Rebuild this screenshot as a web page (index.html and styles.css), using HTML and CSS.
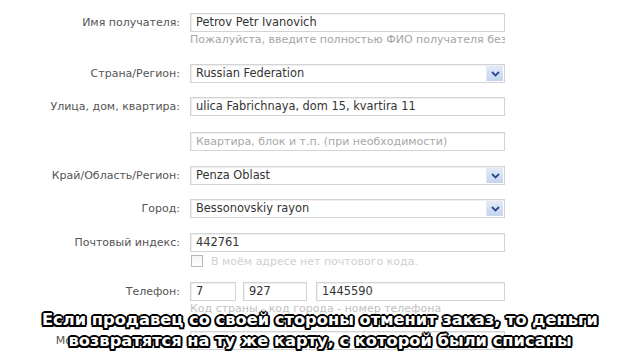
FILE: index.html
```html
<!DOCTYPE html>
<html lang="ru">
<head>
<meta charset="utf-8">
<link rel="stylesheet" href="styles.css">
</head>
<body>
<div class="page">
  <form class="form">
    <div class="row r-name">
      <div class="label">Имя получателя:</div>
      <div class="field">
        <div class="input"><span class="val">Petrov Petr Ivanovich</span></div>
        <div class="hint">Пожалуйста, введите полностью ФИО получателя без учёта регистра</div>
      </div>
    </div>
    <div class="row r-country">
      <div class="label">Страна/Регион:</div>
      <div class="field">
        <div class="input select"><span class="val">Russian Federation</span><span class="arrow"><svg width="9" height="6" viewBox="0 0 9 6"><path d="M1 1 L4.5 4.5 L8 1" fill="none" stroke="#2b4c8c" stroke-width="1.8"/></svg></span></div>
      </div>
    </div>
    <div class="row r-street">
      <div class="label">Улица, дом, квартира:</div>
      <div class="field">
        <div class="input"><span class="val">ulica Fabrichnaya, dom 15, kvartira 11</span></div>
      </div>
    </div>
    <div class="row r-apt">
      <div class="label"></div>
      <div class="field">
        <div class="input"><span class="val ph">Квартира, блок и т.п. (при необходимости)</span></div>
      </div>
    </div>
    <div class="row r-region">
      <div class="label">Край/Область/Регион:</div>
      <div class="field">
        <div class="input select"><span class="val">Penza Oblast</span><span class="arrow"><svg width="9" height="6" viewBox="0 0 9 6"><path d="M1 1 L4.5 4.5 L8 1" fill="none" stroke="#2b4c8c" stroke-width="1.8"/></svg></span></div>
      </div>
    </div>
    <div class="row r-city">
      <div class="label">Город:</div>
      <div class="field">
        <div class="input select"><span class="val">Bessonovskiy rayon</span><span class="arrow"><svg width="9" height="6" viewBox="0 0 9 6"><path d="M1 1 L4.5 4.5 L8 1" fill="none" stroke="#2b4c8c" stroke-width="1.8"/></svg></span></div>
      </div>
    </div>
    <div class="row r-zip">
      <div class="label">Почтовый индекс:</div>
      <div class="field">
        <div class="input"><span class="val">442761</span></div>
        <div class="check"><span class="box"></span><span class="check-text">В моём адресе нет почтового кода.</span></div>
      </div>
    </div>
    <div class="row r-phone">
      <div class="label">Телефон:</div>
      <div class="field">
        <div class="phones">
          <div class="input p1"><span class="val">7</span></div>
          <div class="input p2"><span class="val">927</span></div>
          <div class="input p3"><span class="val">1445590</span></div>
        </div>
        <div class="hint light">Код страны - код города - номер телефона</div>
      </div>
    </div>
    <div class="row r-mobile">
      <div class="label">Мобильный телефон:</div>
      <div class="field">
        <div class="input"><span class="val"></span></div>
      </div>
    </div>
  </form>
  <div class="subs">
    <div class="sub-line">Если продавец со своей стороны отменит заказ, то деньги</div>
    <div class="sub-line">возвратятся на ту же карту, с которой были списаны</div>
  </div>
</div>
</body>
</html>
```
FILE: styles.css
```css
html, body {
  margin: 0;
  padding: 0;
  background: #ffffff;
}
.page {
  position: relative;
  width: 640px;
  height: 360px;
  overflow: hidden;
  font-family: "DejaVu Sans", Verdana, sans-serif;
  font-size: 11px;
}
.form {
  padding-top: 13px;
}
.row {
  display: flex;
  align-items: flex-start;
}
.label {
  width: 180px;
  flex: none;
  text-align: right;
  color: #555;
  line-height: 19px;
  margin-right: 10px;
  white-space: nowrap;
}
.field {
  width: 315px;
  flex: none;
}
.input {
  box-sizing: border-box;
  height: 19px;
  border: 1px solid #d4d4d4;
  box-shadow: inset 1px 1px 1px #eeeeee;
  background: #fff;
  display: flex;
  align-items: center;
  padding-left: 5px;
  color: #333;
  position: relative;
}
.val {
  white-space: nowrap;
  overflow: hidden;
  line-height: 17px;
  font-size: 11.4px;
}
.val.ph {
  color: #a8a8a8;
  font-size: 11px;
}
.select .val {
  flex: 1;
}
.arrow {
  width: 16px;
  height: 15px;
  margin-right: 1px;
  background: linear-gradient(#e3ebf9, #c4d3ef);
  border-left: 1px solid #e4e8f0;
  display: flex;
  align-items: center;
  justify-content: center;
}
.hint {
  color: #a5a5a5;
  white-space: nowrap;
  overflow: hidden;
  line-height: 14px;
  margin-top: 1px;
}
.hint.light {
  color: #c2c2c2;
}
.check {
  display: flex;
  align-items: center;
  margin-top: 3px;
  height: 12px;
}
.box {
  box-sizing: border-box;
  width: 12px;
  height: 12px;
  margin-left: 1px;
  border: 1px solid #b8b8b8;
  background: linear-gradient(#f4f4f4, #ffffff);
}
.check-text {
  margin-left: 8px;
  color: #cfcfcf;
  white-space: nowrap;
}
.phones {
  display: flex;
}
.p1 { width: 46px; margin-right: 7px; }
.p2 { width: 64px; margin-right: 9px; }
.p3 { flex: 1; }

.r-name { margin-bottom: 17px; }
.r-country { margin-bottom: 14px; }
.r-street { margin-bottom: 16px; }
.r-apt { margin-bottom: 15px; }
.r-region { margin-bottom: 14px; }
.r-city { margin-bottom: 15px; }
.r-zip { margin-bottom: 15px; }
.r-phone { margin-bottom: 15px; }

.subs {
  position: absolute;
  left: 0;
  right: 0;
  top: 309px;
  text-align: center;
  font-family: "DejaVu Sans", Verdana, sans-serif;
  font-weight: bold;
  font-size: 16.3px;
  line-height: 21px;
  color: #ffffff;
  text-shadow:
    -1.5px -1.5px 0 #000, 1.5px -1.5px 0 #000,
    -1.5px 1.5px 0 #000, 1.5px 1.5px 0 #000,
    0 -2px 0 #000, 0 2px 0 #000,
    -2px 0 0 #000, 2px 0 0 #000;
}
.sub-line {
  white-space: nowrap;
}
```
